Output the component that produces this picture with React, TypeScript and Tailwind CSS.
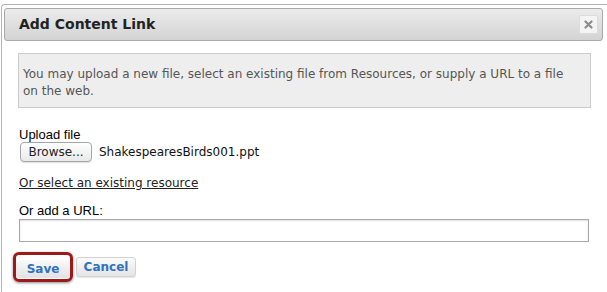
import React from "react";

const verdana = { fontFamily: '"DejaVu Sans", Verdana, sans-serif' };
const helv = { fontFamily: '"Liberation Sans", Arial, sans-serif' };

export default function App() {
  return (
    <div className="w-[607px] h-[292px] bg-white overflow-hidden">
      <div className="ml-[1px] mt-[4px] h-[300px] border-l border-t border-[#b3b3b3] rounded-tl-[4px] pl-[2px] pt-[3px]">
        {/* Title bar */}
        <div className="w-[599px] h-[33px] flex items-center justify-between rounded-[3px] border border-[#a9a9a9] bg-gradient-to-b from-[#ececec] to-[#d3d3d3] pl-[14px] pr-[4px]">
          <span className="text-[14px] font-bold text-[#222]" style={verdana}>
            Add Content Link
          </span>
          <button className="w-[19px] h-[19px] flex items-center justify-center rounded-[2px] bg-[#f4f4f4] border border-[#dcdcdc] text-[#888]">
            <svg width="9" height="9" viewBox="0 0 9 9">
              <path d="M1.5 1.5 L7.5 7.5 M7.5 1.5 L1.5 7.5" stroke="#8a8a8a" strokeWidth="2.2" strokeLinecap="round" />
            </svg>
          </button>
        </div>

        <div className="pl-[14px] pt-[12px]">
          {/* Info box */}
          <div className="w-[573px] h-[55px] bg-[#eeeeee] border border-[#cccccc] pl-[4px] pt-[12px] pr-[14px]">
            <p className="text-[12px] leading-[17px] text-[#555]" style={verdana}>
              You may upload a new file, select an existing file from Resources, or supply a URL to a file on the web.
            </p>
          </div>

          {/* Upload */}
          <div className="mt-[19px] pl-[1px] text-[13px] leading-[15px] text-black" style={helv}>
            Upload file
          </div>
          <div className="flex items-center gap-[7px] pl-[2px]">
            <button
              className="w-[72px] h-[20px] rounded-[4px] border border-[#a6a6a6] bg-gradient-to-b from-white to-[#e9e9e9] text-[12px] text-[#222] shadow-[0_1px_1px_rgba(0,0,0,0.12)]"
              style={verdana}
            >
              Browse...
            </button>
            <span className="text-[12px] text-[#111]" style={verdana}>
              ShakespearesBirds001.ppt
            </span>
          </div>

          <div className="mt-[13px] pl-[1px] text-[12px] leading-[16px]" style={verdana}>
            <a href="#" className="text-[#222] underline">
              Or select an existing resource
            </a>
          </div>

          <div className="mt-[12px] pl-[1px] text-[13px] leading-[16px] text-black" style={helv}>
            Or add a URL:
          </div>
          <input
            type="text"
            className="ml-[1px] block w-[570px] h-[23px] border border-[#a8a8a8] bg-white shadow-[inset_0_1px_2px_rgba(0,0,0,0.12)] outline-none"
          />

          {/* Buttons */}
          <div className="mt-[10px] -ml-[5px] flex items-center gap-[3px]">
            <div className="rounded-[6px] border-[3px] border-[#9c1a1a] shadow-[0_1px_3px_rgba(0,0,0,0.45)]">
              <button
                className="w-[54px] h-[18px] rounded-[3px] bg-gradient-to-b from-[#fafafa] to-[#e2e2e2] text-[12px] font-bold text-[#2f72bd]"
                style={verdana}
              >
                Save
              </button>
            </div>
            <button
              className="w-[60px] h-[20px] rounded-[3px] border border-[#d2d2d2] bg-gradient-to-b from-[#fbfbfb] to-[#e4e4e4] text-[12px] font-bold text-[#2f72bd] shadow-[0_1px_1px_rgba(0,0,0,0.1)]"
              style={verdana}
            >
              Cancel
            </button>
          </div>
        </div>
      </div>
    </div>
  );
}
